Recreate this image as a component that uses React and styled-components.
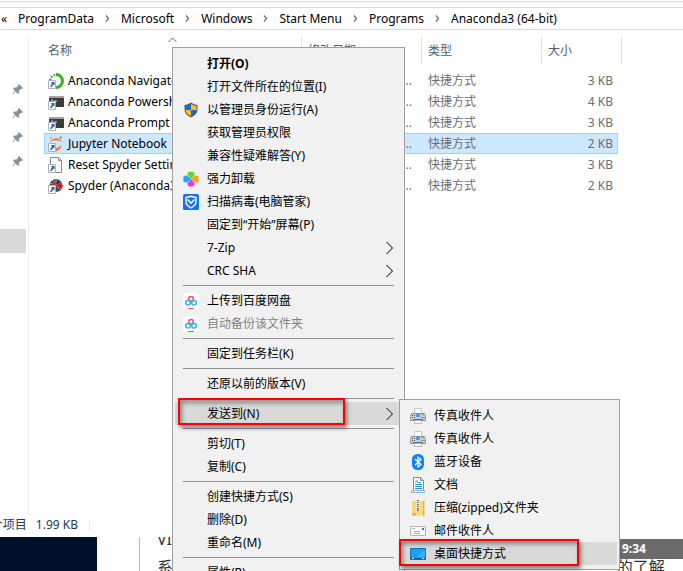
import React from 'react';
import styled, { createGlobalStyle } from 'styled-components';

const GlobalStyle = createGlobalStyle`
    * {
        box-sizing: border-box;
    }
    body {
        margin: 0;
        background: #fff;
    }
    body, button {
        font-family: "Noto Sans", "Noto Sans CJK SC", sans-serif;
        font-size: 12px;
        line-height: 16px;
    }
    button {
        margin: 0;
        padding: 0;
        border: 0;
        background: none;
        color: inherit;
        text-align: left;
        white-space: nowrap;
    }
`

const Screen = styled.div`
    position: relative;
    display: flex;
    flex-direction: column;
    height: 100vh;
    overflow: hidden;
`

const Explorer = styled.section`
    flex: 1;
    min-height: 0;
    display: flex;
    flex-direction: column;
`
const Ribbon = styled.div`
    height: 7px;
    padding-top: 1px;

    &::before {
        content: "";
        display: block;
        height: 1px;
        background: #dcdcdc;
    }
`
const AddressBar = styled.nav`
    display: flex;
    align-items: center;
    gap: 11px;
    height: 23px;
    padding-left: 1px;
    border: solid #d9d9d9;
    border-width: 1px 0;
    white-space: nowrap;
`
const Body = styled.div`
    flex: 1;
    min-height: 0;
    display: flex;
`
const NavPane = styled.aside`
    flex: none;
    display: flex;
    flex-direction: column;
    width: 29px;
    margin-top: 7px;
    padding-top: 40px;
    border-right: 1px solid #f0f0f0;
`
const NavRow = styled.div`
    display: flex;
    align-items: center;
    height: 24px;
    padding-left: 12px;
`
const NavSelected = styled.div`
    height: 24px;
    margin: 56px 2px 0 0;
    background: #d9d9d9;
`

const Files = styled.table`
    align-self: flex-start;
    width: 574px;
    margin: 7px 0 0 15px;
    table-layout: fixed;
    border-collapse: collapse;
`
const HeadCell = styled.th`
    width: ${p => p.$width};
    padding: 0 0 6px;
    font-weight: 400;
    text-align: left;
    color: #4c607a;
`
const HeadLabel = styled.div`
    position: relative;
    display: flex;
    align-items: center;
    height: 27px;
    margin-right: ${p => (p.$last ? '-4px' : '0')};
    padding-left: ${p => (p.$first ? '4px' : '6px')};
    border-right: 1px solid #e2e2e2;
`
const SortMark = styled.svg`
    position: absolute;
    top: 0;
    left: 50%;
    margin-left: -5px;
`
const FileRow = styled.tr`
    height: 21px;
    background: ${p => (p.$selected ? '#cce8ff' : 'transparent')};
    outline: ${p => (p.$selected ? '1px solid #99d1ff' : 'none')};
    outline-offset: -1px;
`
const Cell = styled.td`
    padding: 0 ${p => (p.$end ? p.$end : '0')} 0 6px;
    text-align: ${p => (p.$end ? 'right' : 'left')};
    color: #6d6d6d;
`
const NameCell = styled.td`
    padding: 0 0 0 4px;
    color: #000;
`
const FileName = styled.div`
    display: flex;
    align-items: center;
    gap: 4px;
    overflow: hidden;
    white-space: nowrap;
`

const StatusBar = styled.footer`
    display: flex;
    align-items: center;
    height: 24px;
`
const StatusText = styled.div`
    display: flex;
    justify-content: flex-end;
    gap: 9px;
    width: 90px;
    padding-right: 11px;
    border-right: 1px solid #e8e8e8;
    line-height: 12px;
    overflow: hidden;
    white-space: nowrap;
    color: #1e395b;
`

const Backdrop = styled.div`
    flex: none;
    display: flex;
    height: 34px;
    overflow: hidden;
`
const DarkPanel = styled.div`
    flex: none;
    width: 97px;
    background: #00102a;
`
const Article = styled.article`
    flex: 1;
    margin-left: 42px;
    padding: 2px 0 0 17px;
    border-left: 1px solid #b4bec6;
    font-size: 16px;
    line-height: 16px;
    color: #333;
`
const ArticleLine = styled.div`
    display: flex;
    justify-content: space-between;
    height: 20px;
    padding-right: ${p => p.$inset || '0'};
`
const Heading = styled.span`
    margin-top: -8px;
`
const Clock = styled.span`
    width: 63px;
    padding-left: 2px;
    background: #6b6b6b;
    color: #fff;
    font-size: 12px;
    font-weight: 700;
    line-height: 20px;
`

const Menu = styled.div`
    position: absolute;
    top: ${p => p.$top};
    left: ${p => p.$left};
    width: ${p => p.$width};
    padding: 4px 2px;
    border: 1px solid #a0a0a0;
    background: #f1f1f1;
    color: #000;
`
const Item = styled.button`
    display: flex;
    align-items: center;
    width: 100%;
    height: 23px;
    padding: 0 8px;
    background: ${p => (p.$active ? '#d9d9d9' : 'transparent')};
    font-weight: ${p => (p.$bold ? 700 : 400)};

    &:disabled {
        color: #838383;
    }
`
const IconSlot = styled.span`
    flex: none;
    display: flex;
    width: 16px;
    margin-right: 8px;
`
const ItemText = styled.span`
    flex: 1;
`
const Separator = styled.hr`
    height: 1px;
    margin: 3px 8px;
    border: 0;
    background: #919191;
`
const Marker = styled.div`
    position: absolute;
    top: ${p => p.$top};
    left: ${p => p.$left};
    width: ${p => p.$width};
    height: 27px;
    border: 2px solid #fe0000;
    box-shadow: 2px 3px 4px rgba(0, 0, 0, 0.45), inset 2px 3px 4px rgba(0, 0, 0, 0.4);
    pointer-events: none;
`

const Svg = ({ children, size = 16 }) => (
    <svg width={size} height={size} viewBox="0 0 16 16" aria-hidden="true">{children}</svg>
)

const Pin = () => (
    <svg width="12" height="12" viewBox="0 0 12 12" aria-hidden="true">
        <path d="M7 1l4 4-1 1H9L7 8v2L6 11 3.500 8.500 1 11l-.5-.5L3 8 1 5.500 2 4.500h2L6 3V2z" fill="#8595a0" />
    </svg>
)

const Crumb = () => (
    <svg width="5" height="7" viewBox="0 0 5 7" aria-hidden="true">
        <path d="M1 .5l2.500 3L1 6.500" fill="none" stroke="#777" strokeWidth="1.400" />
    </svg>
)

const Arrow = () => (
    <svg width="9" height="14" viewBox="0 0 9 14" aria-hidden="true">
        <path d="M1 1l6 6-6 6" fill="none" stroke="#d9703a" />
        <path d="M1.700 1l6 6-6 6" fill="none" stroke="#2c3c80" />
    </svg>
)

const ShortcutMark = () => (
    <>
        <path d="M.5 7.500h7v8h-7z" fill="#fff" stroke="#a9b4c0" />
        <path d="M3 9h3.500v3.500L5.400 11.400 3.500 14H2l2-3.800z" fill="#2461a8" />
    </>
)

const Navigator = () => (
    <Svg>
        <path d="M8 1.500a6.200 6.200 0 1 1 0 13" fill="none" stroke="#3eb02f" strokeWidth="3" />
        <path d="M2 7l1-2.500 2-2 3-1" fill="none" stroke="#3eb02f" strokeWidth="2.500" strokeDasharray="1.500 1.500" />
        <ShortcutMark />
    </Svg>
)

const Terminal = () => (
    <Svg>
        <path d="M1 2h15v11H1z" fill="#3c3c3c" />
        <path d="M1 2h15v2H1z" fill="#a4a4a4" />
        <path d="M3 6h2M6 7h3" stroke="#ddd" />
        <ShortcutMark />
    </Svg>
)

const Jupyter = () => (
    <Svg>
        <path d="M2.500 5Q8 0 13.500 5 8 3 2.500 5zM8 12.500q3.500-.5 5-3Q12.500 14 8 15z" fill="#f37726" stroke="#f37726" strokeWidth=".6" />
        <circle cx="12.500" cy="1.500" r="1" fill="#777" />
        <circle cx="3" cy="2" r=".7" fill="#777" />
        <ShortcutMark />
    </Svg>
)

const Page = () => (
    <Svg>
        <path d="M2.500.5h8l3 3v12h-11z" fill="#fafafa" stroke="#888" />
        <path d="M10.500.5v3h3" fill="none" stroke="#888" />
        <ShortcutMark />
    </Svg>
)

const Spyder = () => (
    <Svg>
        <circle cx="8" cy="7.500" r="6.500" fill="#4b4b4b" />
        <path d="M8 1v6M2 5l6 2 6-3M8 7l5 6M4 2l4 5" stroke="#aaa" />
        <path d="M3 7l3-1 2 2 3-2 3 2-3 3" fill="none" stroke="#e01f26" strokeWidth="1.800" />
        <ShortcutMark />
    </Svg>
)

const Shield = () => (
    <Svg>
        <path d="M8 .5Q11 2.500 14.500 3v4q0 6-6.500 8.500Q1.500 13 1.500 7V3Q5 2.500 8 .5z" fill="#5c5c5c" />
        <path d="M8 2v6H2.500V4Q5.500 3.500 8 2z" fill="#0b6fd6" />
        <path d="M8 2v6h5.500V4Q10.500 3.500 8 2z" fill="#fcbf2b" />
        <path d="M8 14V8H2.500Q3 12 8 14z" fill="#fcbf2b" />
        <path d="M8 14V8h5.500Q13 12 8 14z" fill="#0b6fd6" />
    </Svg>
)

const Clover = () => (
    <Svg>
        <path d="M8 8L4.500 4Q4 0 8 .8 12 0 11.500 4z" fill="#5edb2c" />
        <path d="M8 8l4-3.500Q16.500 4 15.500 8q1 4-3.500 3.500z" fill="#fba31d" />
        <path d="M8 8l3.500 4q.5 4-3.500 3.500-4 .5-3.500-3.500z" fill="#e83bd8" />
        <path d="M8 8l-4 3.500Q-.5 12 .5 8-.5 4 4 4.500z" fill="#25a5f5" />
    </Svg>
)

const Guard = () => (
    <Svg>
        <rect width="16" height="16" rx="1.500" fill="#1472ff" />
        <path d="M8 2.200l5 1.300v4q0 4-5 6.300-5-2.300-5-6.300v-4z" fill="none" stroke="#fff" strokeWidth="1.400" />
        <path d="M4.500 5.500L8 9l3.500-3.500" fill="none" stroke="#fff" strokeWidth="1.600" />
    </Svg>
)

const Netdisk = () => (
    <Svg>
        <rect width="16" height="16" rx="3" fill="#fff" />
        <circle cx="8" cy="5.700" r="2.300" fill="none" stroke="#f4506c" strokeWidth="1.500" />
        <circle cx="5" cy="9.700" r="2.300" fill="none" stroke="#2db5f5" strokeWidth="1.500" />
        <circle cx="11" cy="9.700" r="2.300" fill="none" stroke="#2db5f5" strokeWidth="1.500" />
        <path d="M5 15.500h3" stroke="#f4506c" />
        <path d="M8 15.500h3" stroke="#6684ee" />
    </Svg>
)

const Fax = () => (
    <Svg>
        <path d="M4.500.5h7v5h-7z" fill="#fff" stroke="#c2c8ce" />
        <path d="M1.500 5.500h13l1 3v4H.5v-4z" fill="#ccd3da" stroke="#8a939c" />
        <path d="M6 6h4v3H6z" fill="#3f9ff0" />
        <path d="M2 7.500h1M4 7.500h1M2 9.500h1M4 9.500h1M11.500 9.500h1M13.500 9.500h1" stroke="#48515a" />
        <path d="M12 6.500h2" stroke="#4fc53b" strokeWidth="1.500" />
        <path d="M3 11.500h10" stroke="#5a646e" />
        <path d="M4.500 12.500h7v3h-7z" fill="#fff" stroke="#b4bbc2" />
    </Svg>
)

const Bluetooth = () => (
    <Svg>
        <rect x="2" width="12" height="16" rx="5.500" fill="#0a84ff" />
        <path d="M5 5l6 5.500L8 13V3l3 2.500L5 11" fill="none" stroke="#fff" strokeWidth="1.200" />
    </Svg>
)

const Doc = () => (
    <Svg>
        <path d="M3.500.5h7l3 3v11h-10z" fill="#fff" stroke="#858c92" />
        <path d="M10.500.5v3h3" fill="none" stroke="#858c92" />
        <path d="M5 5.500l2-2v2M8 5.500h3M5 7.500h7M5 9.500h7M5 11.500h7" fill="none" stroke="#2492dc" />
        <path d="M1.500 13.500h13v2h-13z" fill="#e5f2fa" stroke="#8bb6d1" />
    </Svg>
)

const Zip = () => (
    <Svg>
        <path d="M2 1h12v14.500H2z" fill="#f8d775" />
        <path d="M13 1h1.500v15H13z" fill="#dfb44d" />
        <path d="M2 13h4v2.500H2z" fill="#e3b549" />
        <path d="M6 0h4v11H6z" fill="#e9e3d0" />
        <path d="M8 0v9" stroke="#777" strokeWidth="2" strokeDasharray="1 1" />
        <path d="M7 8h2v3H7z" fill="#888" />
    </Svg>
)

const Mail = () => (
    <Svg>
        <path d="M.5 3.500h15v9H.5z" fill="#fafafa" stroke="#b5b5b5" />
        <path d="M2 5.500h3M4 8.500h6M4 10.500h6" stroke="#aeb4ba" />
        <path d="M12 5h2v2h-2z" fill="#1e7fe0" />
    </Svg>
)

const Desktop = () => (
    <Svg>
        <path d="M.5 2.500h15v11H.5z" fill="#1aa0f5" stroke="#0873c4" />
        <path d="M15 3v8L7 11z" fill="#3fb3fa" />
        <path d="M1 12.500h14" stroke="#07539a" />
        <path d="M2 12.500h2M12 12.500h2" stroke="#cde8fb" />
    </Svg>
)

const path = ['ProgramData', 'Microsoft', 'Windows', 'Start Menu', 'Programs', 'Anaconda3 (64-bit)']

const files = [
    { name: 'Anaconda Navigator', size: '3 KB', Icon: Navigator },
    { name: 'Anaconda Powershell Prompt', size: '4 KB', Icon: Terminal },
    { name: 'Anaconda Prompt', size: '3 KB', Icon: Terminal },
    { name: 'Jupyter Notebook', size: '2 KB', Icon: Jupyter, selected: true },
    { name: 'Reset Spyder Settings', size: '3 KB', Icon: Page },
    { name: 'Spyder (Anaconda3)', size: '2 KB', Icon: Spyder },
]

// each inner list is a group, groups are split by a separator
const menuGroups = [
    [
        { text: '打开(O)', bold: true },
        { text: '打开文件所在的位置(I)' },
        { text: '以管理员身份运行(A)', Icon: Shield },
        { text: '获取管理员权限' },
        { text: '兼容性疑难解答(Y)' },
        { text: '强力卸载', Icon: Clover },
        { text: '扫描病毒(电脑管家)', Icon: Guard },
        { text: '固定到“开始”屏幕(P)' },
        { text: '7-Zip', more: true },
        { text: 'CRC SHA', more: true },
    ],
    [
        { text: '上传到百度网盘', Icon: Netdisk },
        { text: '自动备份该文件夹', Icon: Netdisk, disabled: true },
    ],
    [{ text: '固定到任务栏(K)' }],
    [{ text: '还原以前的版本(V)' }],
    [{ text: '发送到(N)', more: true, active: true }],
    [{ text: '剪切(T)' }, { text: '复制(C)' }],
    [{ text: '创建快捷方式(S)' }, { text: '删除(D)' }, { text: '重命名(M)' }],
    [{ text: '属性(R)' }],
]

const sendTo = [
    { text: '传真收件人', Icon: Fax },
    { text: '传真收件人', Icon: Fax },
    { text: '蓝牙设备', Icon: Bluetooth },
    { text: '文档', Icon: Doc },
    { text: '压缩(zipped)文件夹', Icon: Zip },
    { text: '邮件收件人', Icon: Mail },
    { text: '桌面快捷方式', Icon: Desktop, active: true },
]

function MenuItem({ item }) {
    const { text, Icon, bold, more, active, disabled } = item
    return (
        <Item type="button" role="menuitem" $bold={bold} $active={active} disabled={disabled}>
            <IconSlot>{Icon && <Icon />}</IconSlot>
            <ItemText>{text}</ItemText>
            {more && <Arrow />}
        </Item>
    )
}

function FileTable() {
    return (
        <Files>
            <thead>
                <tr>
                    <HeadCell $width="258px">
                        <HeadLabel $first>
                            名称
                            <SortMark width="9" height="6" viewBox="0 0 9 6" aria-hidden="true">
                                <path d="M.5 5l4-4 4 4" fill="none" stroke="#666" />
                            </SortMark>
                        </HeadLabel>
                    </HeadCell>
                    <HeadCell $width="120px"><HeadLabel>修改日期</HeadLabel></HeadCell>
                    <HeadCell $width="120px"><HeadLabel>类型</HeadLabel></HeadCell>
                    <HeadCell><HeadLabel $last>大小</HeadLabel></HeadCell>
                </tr>
            </thead>
            <tbody>
                {files.map(({ name, size, Icon, selected }) => (
                    <FileRow key={name} $selected={selected}>
                        <NameCell>
                            <FileName><Icon />{name}</FileName>
                        </NameCell>
                        <Cell $end="10px">...</Cell>
                        <Cell>快捷方式</Cell>
                        <Cell $end="5px">{size}</Cell>
                    </FileRow>
                ))}
            </tbody>
        </Files>
    )
}

export default function App() {
    return (
        <Screen>
            <GlobalStyle />
            <Explorer>
                <Ribbon />
                <AddressBar>
                    <span>«</span>
                    {path.map((part, i) => (
                        <React.Fragment key={part}>
                            {i > 0 && <Crumb />}
                            <button type="button">{part}</button>
                        </React.Fragment>
                    ))}
                </AddressBar>
                <Body>
                    <NavPane>
                        {[1, 2, 3, 4].map(n => <NavRow key={n}><Pin /></NavRow>)}
                        <NavSelected />
                    </NavPane>
                    <FileTable />
                </Body>
                <StatusBar>
                    <StatusText>
                        <span>选中 1 个项目</span>
                        <span>1.99 KB</span>
                    </StatusText>
                </StatusBar>
            </Explorer>
            <Backdrop>
                <DarkPanel />
                <Article>
                    <ArticleLine>
                        <Heading>VI</Heading>
                        <Clock>9:34</Clock>
                    </ArticleLine>
                    <ArticleLine $inset="14px">
                        <span>系</span>
                        <span>的了解.</span>
                    </ArticleLine>
                </Article>
            </Backdrop>
            <Menu role="menu" $top="47px" $left="172px" $width="233px">
                {menuGroups.map((group, i) => (
                    <React.Fragment key={i}>
                        {i > 0 && <Separator />}
                        {group.map(item => <MenuItem key={item.text} item={item} />)}
                    </React.Fragment>
                ))}
            </Menu>
            <Menu role="menu" $top="399px" $left="399px" $width="221px">
                {sendTo.map((item, i) => <MenuItem key={i} item={item} />)}
            </Menu>
            <Marker $top="398px" $left="178px" $width="167px" />
            <Marker $top="539px" $left="399px" $width="180px" />
        </Screen>
    )
}
